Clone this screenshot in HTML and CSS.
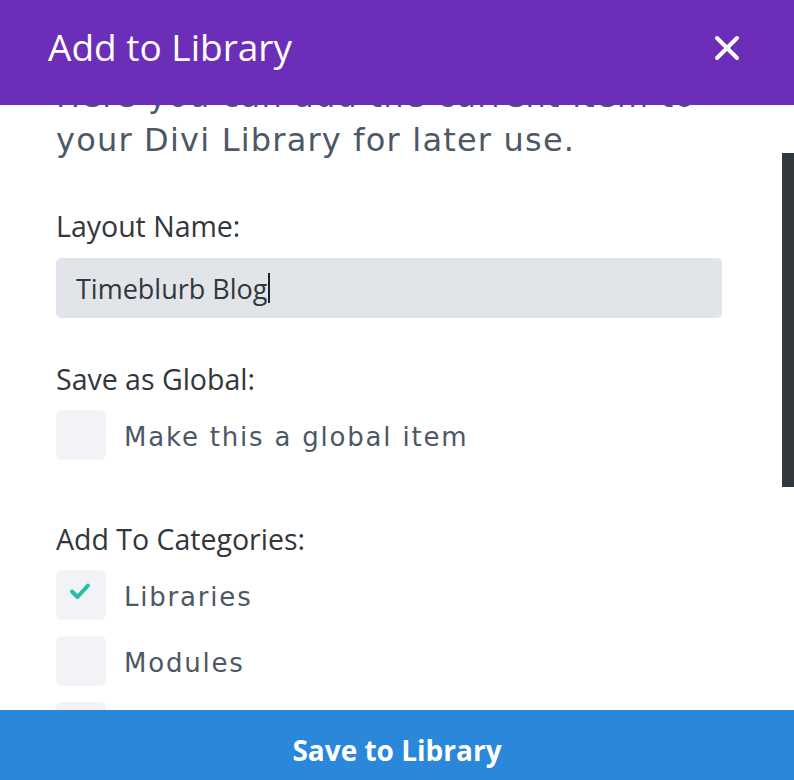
FILE: index.html
```html
<!DOCTYPE html>
<html lang="en">
<head>
  <meta charset="UTF-8">
  <title>Add to Library</title>
  <link rel="stylesheet" href="styles.css">
</head>
<body>
  <div class="modal">
    <div class="modal-header">
      <div class="modal-title">Add to Library</div>
      <button class="close-btn" aria-label="Close">
        <svg width="26" height="26" viewBox="0 0 26 26"><path d="M3 3L23 23M23 3L3 23" stroke="#fff" stroke-width="4" stroke-linecap="round"/></svg>
      </button>
    </div>
    <div class="modal-body">
      <div class="modal-content">
        <p class="intro">Here you can add the current item to your Divi Library for later use.</p>
        <div class="field-label">Layout Name:</div>
        <div class="text-input">Timeblurb Blog<span class="caret"></span></div>
        <div class="field-label label-gap">Save as Global:</div>
        <div class="check-row">
          <span class="check-box"></span>
          <span class="check-text">Make this a global item</span>
        </div>
        <div class="field-label label-gap-lg">Add To Categories:</div>
        <div class="check-list">
          <div class="check-row">
            <span class="check-box">
              <svg width="22" height="18" viewBox="0 0 22 18"><path d="M3 9.5L8.5 15L19 3.5" fill="none" stroke="#26bfa1" stroke-width="4" stroke-linecap="round" stroke-linejoin="round"/></svg>
            </span>
            <span class="check-text">Libraries</span>
          </div>
          <div class="check-row">
            <span class="check-box"></span>
            <span class="check-text">Modules</span>
          </div>
          <div class="check-row">
            <span class="check-box"></span>
            <span class="check-text">Sections</span>
          </div>
        </div>
      </div>
      <div class="scroll-thumb"></div>
    </div>
    <button class="save-btn">Save to Library</button>
  </div>
</body>
</html>
```

FILE: styles.css
```css
:root {
  --purple: #6c2eb9;
  --blue: #2b87da;
  --label: #32373c;
  --muted: #4c5866;
  --field: #e1e5e9;
  --box: #f1f3f7;
}
html, body {
  margin: 0; padding: 0;
  background: #fff;
}
body {
  width: 794px;
  height: 780px;
  overflow: hidden;
  font-family: 'Open Sans', sans-serif;
}
.modal {
  display: flex;
  flex-direction: column;
  height: 780px;
}
.modal-header {
  height: 105px;
  flex: none;
  background: var(--purple);
  display: flex;
  align-items: center;
  justify-content: space-between;
  padding: 0 54px 0 48px;
  position: relative;
  z-index: 2;
}
.modal-title {
  color: #fff;
  font-size: 37px;
  font-weight: 500;
  line-height: 40px;
  margin-top: -11px;
}
.close-btn {
  background: none;
  border: none;
  padding: 0;
  width: 26px;
  height: 26px;
  margin-top: -10px;
  cursor: pointer;
}
.close-btn svg { display: block; }
.modal-body {
  flex: 1;
  overflow: hidden;
  position: relative;
}
.modal-content {
  padding: 0 50px 0 56px;
  margin-top: -31px;
}
.intro {
  margin: 0;
  font-family: 'DejaVu Sans', sans-serif;
  font-size: 32px;
  line-height: 44px;
  letter-spacing: 1.2px;
  color: var(--muted);
}
.field-label {
  font-size: 28.5px;
  font-weight: 500;
  line-height: 34px;
  color: var(--label);
  margin-top: 47px;
}
.label-gap { margin-top: 44px; }
.label-gap-lg { margin-top: 62px; }
.text-input {
  margin-top: 15px;
  margin-right: 22px;
  height: 60px;
  background: var(--field);
  border-radius: 5px;
  padding: 0 20px;
  display: flex;
  align-items: center;
  font-size: 27px;
  color: var(--label);
}
.caret {
  display: inline-block;
  width: 2px;
  height: 30px;
  background: #222;
  margin-left: 1px;
}
.check-row {
  display: flex;
  align-items: center;
  gap: 18px;
  margin-top: 14px;
}
.check-list {
  display: flex;
  flex-direction: column;
  gap: 16px;
  margin-top: 14px;
}
.check-list .check-row { margin-top: 0; }
.check-box {
  width: 50px;
  height: 50px;
  flex: none;
  border-radius: 6px;
  background: var(--box);
  display: flex;
  align-items: center;
  justify-content: center;
}
.check-box svg { margin: -8px 0 0 -2px; }
.check-text {
  font-family: 'DejaVu Sans', sans-serif;
  font-size: 26px;
  letter-spacing: 1.8px;
  color: var(--muted);
  padding-top: 4px;
}
.scroll-thumb {
  position: absolute;
  right: 0;
  top: 48px;
  width: 12px;
  height: 334px;
  background: #33383c;
}
.save-btn {
  height: 70px;
  flex: none;
  border: none;
  background: var(--blue);
  color: #fff;
  font-family: 'Open Sans', sans-serif;
  font-weight: 700;
  font-size: 28px;
  padding: 10px 0 0 0;
  cursor: pointer;
  position: relative;
  z-index: 2;
}
```
